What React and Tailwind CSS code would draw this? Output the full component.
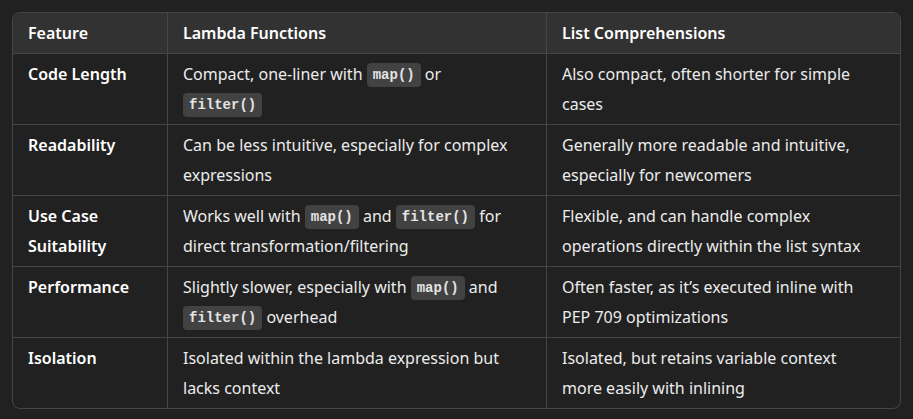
import React from "react";

const C = ({ children }) => (
  <code className="rounded-[4px] bg-[#424242] px-[6px] py-[4px] align-[1px] font-['Liberation_Mono',monospace] text-[14px] leading-none font-bold text-[#e3e3e3]">
    {children}
  </code>
);

const rows = [
  {
    f: <>Code Length</>,
    l: <>Compact, one-liner with <C>map()</C> or<br /><C>filter()</C></>,
    c: <>Also compact, often shorter for simple<br />cases</>,
  },
  {
    f: <>Readability</>,
    l: <>Can be less intuitive, especially for complex<br />expressions</>,
    c: <>Generally more readable and intuitive,<br />especially for newcomers</>,
  },
  {
    f: <>Use Case<br />Suitability</>,
    l: <>Works well with <C>map()</C> and <C>filter()</C> for<br />direct transformation/filtering</>,
    c: <>Flexible, and can handle complex<br />operations directly within the list syntax</>,
  },
  {
    f: <>Performance</>,
    l: <>Slightly slower, especially with <C>map()</C> and<br /><C>filter()</C> overhead</>,
    c: <>Often faster, as it’s executed inline with<br />PEP 709 optimizations</>,
  },
  {
    f: <>Isolation</>,
    l: <>Isolated within the lambda expression but<br />lacks context</>,
    c: <>Isolated, but retains variable context<br />more easily with inlining</>,
  },
];

export default function App() {
  return (
    <div className="min-h-screen w-full bg-[#212121] p-[12px] font-['Noto_Sans',sans-serif] text-[16px] text-[#ececec]">
      <div className="w-[889px] overflow-hidden rounded-[8px] border border-[#464646]">
        <div className="grid grid-cols-[154px_379px_1fr] bg-[#323232] font-semibold text-white">
          <div className="px-[15px] py-[5px] leading-[30px]">Feature</div>
          <div className="border-l border-[#464646] px-[15px] py-[5px] leading-[30px]">Lambda Functions</div>
          <div className="border-l border-[#464646] px-[15px] py-[5px] leading-[30px]">List Comprehensions</div>
        </div>
        {rows.map((r, i) => (
          <div key={i} className="grid grid-cols-[154px_379px_1fr] border-t border-[#464646]">
            <div className="px-[15px] py-[5px] font-semibold leading-[30px] text-white">{r.f}</div>
            <div className="border-l border-[#464646] px-[15px] py-[5px] leading-[30px]">{r.l}</div>
            <div className="border-l border-[#464646] px-[15px] py-[5px] leading-[30px]">{r.c}</div>
          </div>
        ))}
      </div>
    </div>
  );
}
